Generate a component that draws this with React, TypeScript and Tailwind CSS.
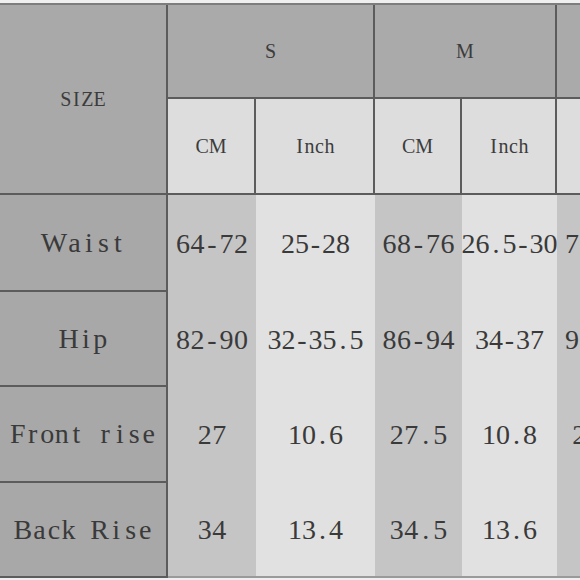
const rows = [
  { label: "Waist", values: ["64-72", "25-28", "68-76", "26.5-30", "72-80", "28-31.5"] },
  { label: "Hip", values: ["82-90", "32-35.5", "86-94", "34-37", "90-98", "35.5-38.5"] },
  { label: "Front rise", values: ["27", "10.6", "27.5", "10.8", "28.5", "11.2"] },
  { label: "Back Rise", values: ["34", "13.4", "34.5", "13.6", "35", "13.8"] },
];

// SimSun-like look: every glyph sits in a fixed-width box (wide letters may grow)
const Mono = ({ text, w }: { text: string; w: string }) => (
  <span className="inline-flex">
    {[...text].map((c, i) => (
      <span key={i} className={`inline-block text-center ${w}`}>
        {c === " " ? "\u00a0" : c}
      </span>
    ))}
  </span>
);

const head = "flex items-center justify-center border-[#5c5c5c] text-[20px] text-[#3c3c3c]";
const cell = "flex items-center justify-center text-[28px] text-[#3a3a3a]";

export default function App() {
  return (
    <div className="h-[580px] w-[580px] overflow-hidden bg-[#efefef] pt-[3px] [font-family:Liberation_Serif,Times_New_Roman,serif]">
      <div className="grid w-[700px] grid-cols-[168px_88px_119px_87px_95px_88px_1fr] grid-rows-[94px_96px_97px_95px_96px_95px] border-t-2 border-[#7d7d7d]">
        {/* Header */}
        <div className={`${head} row-span-2 border-r-2 border-b-2 bg-[#a9a9a9]`}>
          <Mono text="SIZE" w="min-w-[10px]" />
        </div>
        <div className={`${head} col-span-2 border-r-2 border-b-2 bg-[#aaaaaa]`}>
          <Mono text="S" w="min-w-[10px]" />
        </div>
        <div className={`${head} col-span-2 border-r-2 border-b-2 bg-[#aaaaaa]`}>
          <Mono text="M" w="min-w-[10px]" />
        </div>
        <div className={`${head} col-span-2 border-b-2 bg-[#aaaaaa]`}>
          <Mono text="L" w="min-w-[10px]" />
        </div>

        {["CM", "Inch", "CM", "Inch", "CM"].map((t, i) => (
          <div key={i} className={`${head} border-r-2 border-b-2 bg-[#dddddd]`}>
            <Mono text={t} w="min-w-[10px]" />
          </div>
        ))}
        <div className={`${head} border-b-2 bg-[#dddddd]`}>
          <Mono text="Inch" w="min-w-[10px]" />
        </div>

        {/* Body */}
        {rows.map((r, ri) => {
          const last = ri === rows.length - 1;
          return [
            <div
              key={r.label}
              className={`${cell} border-r-2 border-b-2 border-[#5c5c5c] bg-[#a8a8a8]`}
            >
              <Mono text={r.label} w="min-w-[14.5px]" />
            </div>,
            ...r.values.map((v, vi) => (
              <div
                key={r.label + vi}
                className={`${cell} ${vi % 2 === 0 ? "bg-[#c5c5c5]" : "bg-[#e1e1e1]"} ${
                  last ? "border-b-2 border-[#9a9a9a]" : ""
                }`}
              >
                <Mono text={v} w={vi % 2 === 0 ? "min-w-[14.5px]" : "min-w-[13px]"} />
              </div>
            )),
          ];
        })}
      </div>
    </div>
  );
}
